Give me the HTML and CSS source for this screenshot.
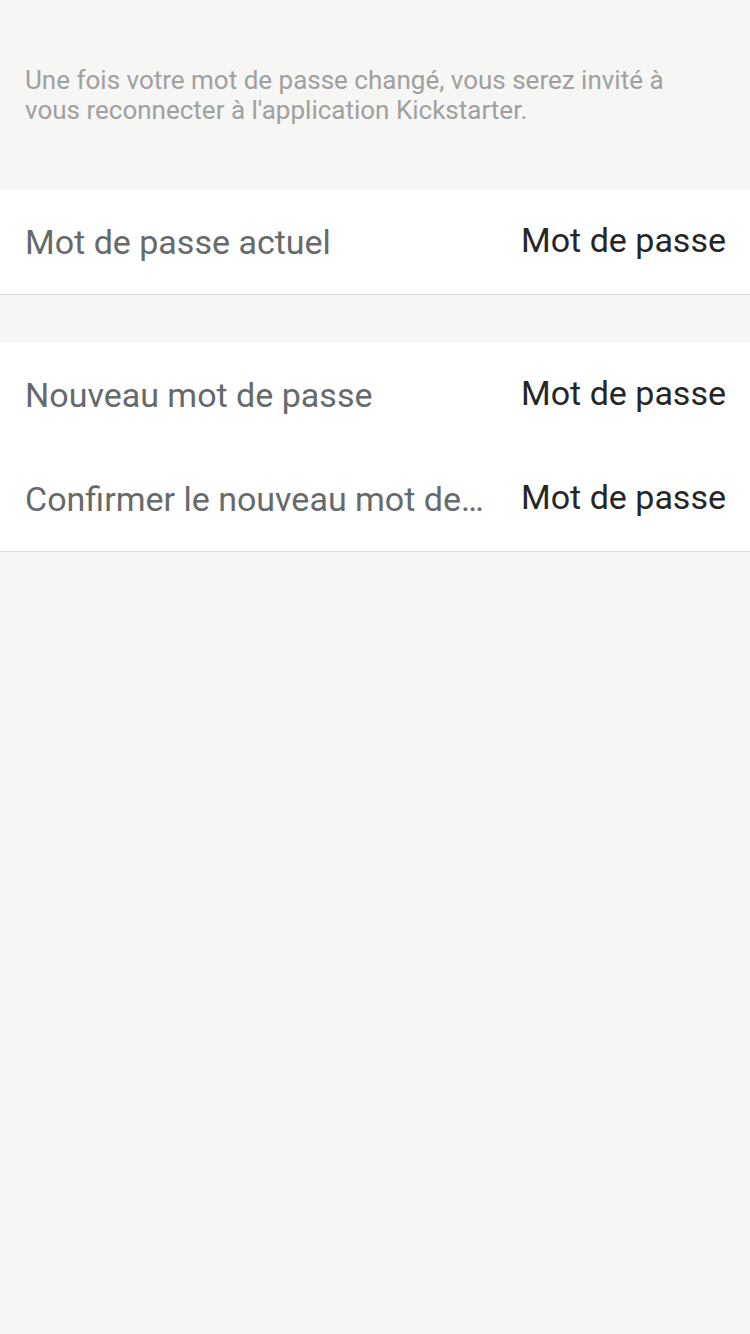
FILE: index.html
```html
<!DOCTYPE html>
<html lang="fr">
<head>
<meta charset="utf-8">
<link rel="stylesheet" href="styles.css">
</head>
<body>
<div class="page">
  <p class="help">Une fois votre mot de passe changé, vous serez invité à vous reconnecter à l'application Kickstarter.</p>
  <section class="group">
    <div class="row">
      <span class="label">Mot de passe actuel</span>
      <span class="value">Mot de passe</span>
    </div>
  </section>
  <section class="group">
    <div class="row">
      <span class="label">Nouveau mot de passe</span>
      <span class="value">Mot de passe</span>
    </div>
    <div class="row">
      <span class="label" title="Confirmer le nouveau mot de passe">Confirmer le nouveau mot de…</span>
      <span class="value">Mot de passe</span>
    </div>
  </section>
</div>
</body>
</html>
```
FILE: styles.css
```css
html, body {
  margin: 0;
  padding: 0;
  background: #f6f6f4;
}
.page {
  width: 750px;
  min-height: 1334px;
  font-family: Roboto, "Liberation Sans", sans-serif;
  display: flex;
  flex-direction: column;
}
.help {
  margin: 0;
  padding: 65px 55px 65px 25px;
  font-size: 26px;
  line-height: 30px;
  color: #a0a0a0;
}
.group {
  background: #ffffff;
  border-bottom: 1px solid #dedede;
  margin-bottom: 48px;
}
.row {
  height: 104px;
  display: flex;
  align-items: center;
  padding: 0 24px 0 25px;
  gap: 20px;
}
.label {
  flex: 1;
  min-width: 0;
  font-size: 34px;
  color: #666a6a;
  white-space: nowrap;
}
.value {
  flex: none;
  font-size: 34px;
  color: #262626;
  margin-top: -4px;
}
```
